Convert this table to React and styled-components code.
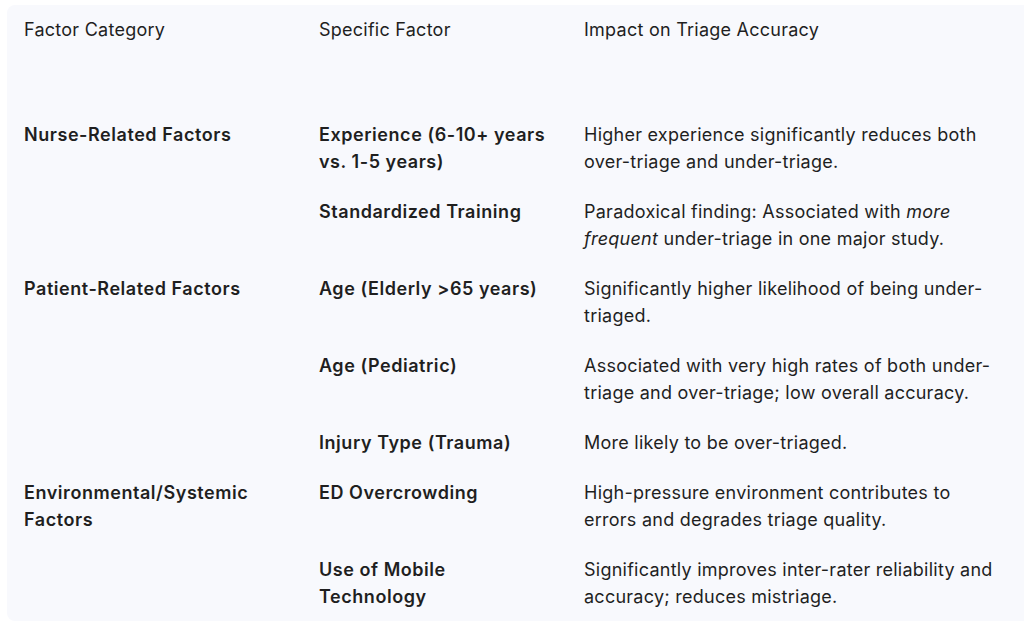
import styled, { createGlobalStyle } from 'styled-components';

const GlobalStyle = createGlobalStyle`
  html, body {
    margin: 0;
    padding: 0;
    background: #ffffff;
  }
  body {
    font-family: Inter, Roboto, "Liberation Sans", sans-serif;
    color: #1f1f1f;
  }
`;

const rows = [
  {
    category: 'Nurse-Related Factors',
    factor: 'Experience (6-10+ years vs. 1-5 years)',
    impact: 'Higher experience significantly reduces both over-triage and under-triage.',
  },
  {
    category: '',
    factor: 'Standardized Training',
    impact: (
      <>
        Paradoxical finding: Associated with <em>more frequent</em> under-triage in one major study.
      </>
    ),
  },
  {
    category: 'Patient-Related Factors',
    factor: 'Age (Elderly >65 years)',
    impact: 'Significantly higher likelihood of being under-triaged.',
  },
  {
    category: '',
    factor: 'Age (Pediatric)',
    impact: 'Associated with very high rates of both under-triage and over-triage; low overall accuracy.',
  },
  {
    category: '',
    factor: 'Injury Type (Trauma)',
    impact: 'More likely to be over-triaged.',
  },
  {
    category: 'Environmental/Systemic Factors',
    factor: 'ED Overcrowding',
    impact: 'High-pressure environment contributes to errors and degrades triage quality.',
  },
  {
    category: '',
    factor: 'Use of Mobile Technology',
    impact: 'Significantly improves inter-rater reliability and accuracy; reduces mistriage.',
  },
];

const App = () => {
  return (
    <>
      <GlobalStyle />
      <Panel>
        <Table>
          <colgroup>
            <col style={{ width: 295 }} />
            <col style={{ width: 265 }} />
            <col />
          </colgroup>
          <thead>
            <HeadRow>
              <HeadCell>Factor Category</HeadCell>
              <HeadCell>Specific Factor</HeadCell>
              <HeadCell>Impact on Triage Accuracy</HeadCell>
            </HeadRow>
          </thead>
          <tbody>
            {rows.map((row, i) => (
              <tr key={i}>
                <Cell $bold>{row.category}</Cell>
                <Cell $bold>{row.factor}</Cell>
                <Cell>{row.impact}</Cell>
              </tr>
            ))}
          </tbody>
        </Table>
      </Panel>
    </>
  );
};

export default App;

const Panel = styled.div`
  margin: 5px 0 0 7px;
  padding: 0 0 0 17px;
  background: #f8f9fd;
  border-radius: 8px 0 0 8px;
  overflow: hidden;
`;

const Table = styled.table`
  border-collapse: collapse;
  table-layout: fixed;
  width: 100%;
  font-size: 18px;
  line-height: 27px;
  letter-spacing: 0.25px;
`;

const HeadRow = styled.tr`
  height: 104px;
  vertical-align: top;
`;

const HeadCell = styled.th`
  box-sizing: border-box;
  text-align: left;
  font-weight: 400;
  padding: 11px 26px 0 0;
`;

const Cell = styled.td`
  box-sizing: border-box;
  vertical-align: top;
  padding: 11.5px 26px 11.5px 0;
  font-weight: ${({ $bold }) => ($bold ? 600 : 400)};
  letter-spacing: ${({ $bold }) => ($bold ? '0.55px' : '0.25px')};
  em {
    font-style: italic;
  }
`;
